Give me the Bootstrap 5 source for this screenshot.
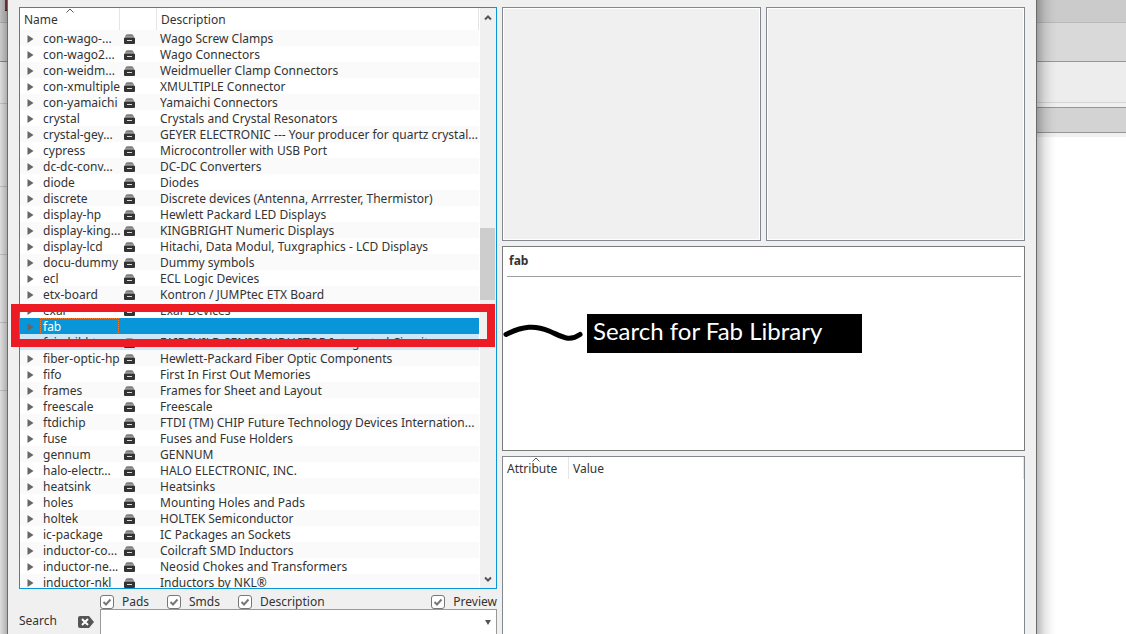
<!DOCTYPE html>
<html lang="en">
<head>
<meta charset="utf-8">
<meta name="viewport" content="width=device-width, initial-scale=1">
<title>Add part</title>
<link href="https://cdn.jsdelivr.net/npm/bootstrap@5.3.0/dist/css/bootstrap.min.css" rel="stylesheet">
<style>
  :root { --face: #f0f0f0; --edge: #828790; --accent: #0996d9; --mark-red: #ed1c24; }
  body { font: 12px/16px "Noto Sans", sans-serif; color: #333; background: #fff; }
  .desk { display: grid; grid-template: minmax(0, 1fr) / 7px minmax(0, 1fr) 89px; }
  .dialog-win { background: var(--face); border: solid #6b6b6b; border-width: 0 1px; padding: 7px 11px 0; }
  .panes { display: grid; grid-template: minmax(0, 1fr) / minmax(0, 478fr) minmax(0, 523fr); gap: 5px; }
  .pane-left { min-height: 0; }
  .pane-right { gap: 5px; }

  /* desktop showing behind the dialog */
  .back-left { background: #e4e4e4; }
  .back-left .b1 { height: 23px; background: #c4c4c4; border-bottom: 1px solid #b0b0b0; }
  .back-left .b1::before { content: ""; display: block; width: 2px; height: 11px; margin-left: 5px; background: #7d3a44; border-bottom: 1px solid #222; }
  .back-left .b2 { height: 39px; background: #d2d2d2; border-bottom: 1px solid #8c8c8c; }
  .back-left .tick { height: 68px; border-bottom: 1px solid #c4c4c4; }
  .back-left .tick.first { height: 42px; }
  .back-left .tick.second { height: 83px; }
  .back-right::before, .back-left::after { content: ""; position: absolute; inset: 0; }
  .back-right::before { background: linear-gradient(to right, #0004, #00000018 8px, #00000006 15px, #0000 20px); }
  .back-left::after { background: linear-gradient(to right, #00000008, #0000003a); }
  .back-right .b1 { height: 23px; background: #cbcbcb; border-bottom: 1px solid #b9b9b9; }
  .back-right .b2 { height: 39px; background: #d9d9d9; border-bottom: 1px solid #969696; }
  .back-right .b3 { height: 41px; background: #ededed; border-bottom: 1px solid #d6d6d6; }
  .back-right .b4 { height: 5px; background: #f0f0f0; border-bottom: 1px solid #969696; }
  .back-right .b5 { height: 25px; background: #d3d3d3; border-bottom: 1px solid #969696; }
  .back-right .b6 { height: 4px; background: #f0f0f0; }

  .lib-list { border: 1px solid var(--accent); background: #fff; min-height: 0; }
  .lib-table, .attr-table { table-layout: fixed; border-collapse: separate; border-spacing: 0; }
  .lib-table th, .attr-table th { height: 22px; padding: 1px 4px 0; font-weight: 400; border-right: 1px solid #e5e5e5; position: relative; }
  .lib-table td { height: 16px; padding: 1px 0 0 3px; white-space: nowrap; overflow: hidden; line-height: 15px; vertical-align: middle; }
  .lib-table tbody tr:nth-child(odd) { background: #fafafa; }
  .lib-table tbody tr.picked { background: var(--accent); color: #fff; }
  .lib-table tbody tr.hovered { background: #cce8f6; }
  .lib-table svg, .attr-table svg { display: block; }
  .lib-table td.icon-cell { padding-left: 4px; }
  .col-name { width: 100px; }
  .col-icon { width: 37px; }
  .col-attr { width: 66px; }
  .node { display: flex; align-items: center; }
  .node svg { margin: 0 9px 0 4px; flex: none; }
  .picked .node span { flex: 1; outline: 1px dotted #f57a2a; margin: 0 2px 0 -2px; padding-left: 2px; }
  .sort-mark { position: absolute; left: 50%; top: 0; margin-left: -4px; }
  .track { width: 17px; flex: none; background: var(--face); border-left: 1px solid #fff; padding: 6px 0 5px; }
  .thumb { position: absolute; left: 0; right: 1px; top: 38%; height: 72px; background: #cdcdcd; }
  .options { height: 20px; margin-left: 81px; padding-top: 5px; }
  .options .form-check-input { width: 14px; height: 14px; margin: 0; border: 1px solid #777; border-radius: 3px; background-size: 12px; background-color: #fff;
    background-image: url("data:image/svg+xml,%3Csvg xmlns='http://www.w3.org/2000/svg' viewBox='0 0 12 12'%3E%3Cpath d='M2.5 6l2.5 2.5 4.5-5' fill='none' stroke='%23777' stroke-width='2'/%3E%3C/svg%3E"); }
  .options label { margin-left: 8px; }
  .options .item { display: flex; align-items: center; height: 16px; }
  .options .w-pads { width: 67px; }
  .options .w-smds { width: 71px; }
  .search-row { height: 25px; }
  .search-row label { width: 59px; }
  .clear-btn { width: 22px; }
  .search-row .combo { border: 1px solid #999; border-bottom: 0; background: #fff; }
  .search-row input { border: 0; outline: 0; min-width: 0; background: none; }
  .plain { border: 0; background: none; padding: 0; display: flex; align-items: center; }

  .previews { display: grid; grid-template-columns: 1fr 1fr; gap: 5px; height: 234px; }
  .preview-box { border: 1px solid var(--edge); box-shadow: inset 0 0 0 1px #fff; }
  .info-box { height: 205px; border: 1px solid #7a7a7a; background: #fff; padding: 0 3px 0 4px; }
  .info-box h2 { font: 700 12px/16px "Noto Sans", sans-serif; padding: 6px 2px 7px; margin: 0; border-bottom: 1px solid #a0a0a0; }
  .attr-box { border: 1px solid var(--edge); border-bottom: 0; background: #fff; }

  .red-frame { position: absolute; left: -8px; right: 2px; top: 297px; height: 43px; border: 8px solid var(--mark-red); }
  .callout { position: absolute; left: 1px; top: 307px; }
  .callout svg { display: block; }
  .callout p { width: 275px; height: 39px; margin: 0 0 0 4px; padding-left: 6px; background: #000; color: #fff; font: 24px/34px Lato, sans-serif; }
</style>
</head>
<body>
<svg class="d-none">
  <symbol id="i-drawer" viewBox="0 0 11 10"><path d="M0 4.500 1.500 1.500Q2 0 3.500 0H7.500Q9 0 9.500 1.500L11 4.500Z" fill="#999"/><path d="M1 3.500H10M2 1.500H9" stroke="#777" stroke-width=".8"/><path d="M0 4H11V9Q11 10 10 10H1Q0 10 0 9Z" fill="#333"/><path d="M3 6.500H8" stroke="#ddd"/></symbol>
  <symbol id="i-tri" viewBox="0 0 7 8"><path d="M.5 0 6.500 4 .5 8Z" fill="#666"/></symbol>
  <symbol id="i-sort" viewBox="0 0 8 5"><path d="M.5 4.500 4 1 7.500 4.500" fill="none" stroke="#555"/></symbol>
  <symbol id="i-up" viewBox="0 0 8 7"><path d="M1 5.500 4 2.500 7 5.500" fill="none" stroke="#555" stroke-width="2"/></symbol>
  <symbol id="i-down" viewBox="0 0 8 7"><path d="M1 1.500 4 4.500 7 1.500" fill="none" stroke="#555" stroke-width="2"/></symbol>
</svg>

<div class="desk vh-100 overflow-hidden">
  <div class="back-left position-relative overflow-hidden">
    <div class="b1"></div><div class="b2"></div>
    <div class="tick first"></div><div class="tick second"></div><div class="tick"></div><div class="tick"></div><div class="tick"></div>
  </div>

  <main class="dialog-win panes">
    <section class="position-relative d-flex flex-column pane-left">
      <div class="lib-list d-flex flex-grow-1 overflow-hidden">
        <div class="flex-grow-1 overflow-hidden">
          <table class="lib-table w-100">
            <colgroup><col class="col-name"><col class="col-icon"><col></colgroup>
            <thead><tr>
              <th scope="col">Name<svg class="sort-mark" width="8" height="5"><use href="#i-sort"/></svg></th>
              <th scope="col"></th><th scope="col">Description</th>
            </tr></thead>
            <tbody id="libs"></tbody>
          </table>
        </div>
        <div class="track d-flex flex-column align-items-center justify-content-between position-relative">
          <button class="plain" aria-label="Scroll up"><svg width="8" height="7"><use href="#i-up"/></svg></button>
          <div class="thumb"></div>
          <button class="plain" aria-label="Scroll down"><svg width="8" height="7"><use href="#i-down"/></svg></button>
        </div>
      </div>
      <div class="options d-flex">
        <div class="item w-pads"><input class="form-check-input" type="checkbox" id="pads" checked><label for="pads">Pads</label></div>
        <div class="item w-smds"><input class="form-check-input" type="checkbox" id="smds" checked><label for="smds">Smds</label></div>
        <div class="item"><input class="form-check-input" type="checkbox" id="desc" checked><label for="desc">Description</label></div>
        <div class="item ms-auto"><input class="form-check-input" type="checkbox" id="prev" checked><label for="prev">Preview</label></div>
      </div>
      <div class="search-row d-flex">
        <label for="search" class="pt-1">Search</label>
        <button class="plain clear-btn" aria-label="Clear search"><svg width="16" height="12" viewBox="0 0 16 12"><path d="M2 0H11L16 6 11 12H2Q0 12 0 10V2Q0 0 2 0Z" fill="#555"/><path d="M4 3 10 9M10 3 4 9" stroke="#fff" stroke-width="2"/></svg></button>
        <div class="combo d-flex flex-grow-1">
          <input id="search" class="flex-grow-1" type="text">
          <button class="plain pe-1" aria-label="Recent searches"><svg width="8" height="5" viewBox="0 0 8 5"><path d="M1 0H7L4 5Z" fill="#555"/></svg></button>
        </div>
      </div>
      <div class="red-frame"></div>
    </section>

    <section class="position-relative d-flex flex-column pane-right">
      <div class="previews"><div class="preview-box"></div><div class="preview-box"></div></div>
      <div class="info-box"><h2>fab</h2></div>
      <div class="attr-box flex-grow-1">
        <table class="attr-table w-100">
          <colgroup><col class="col-attr"><col></colgroup>
          <thead><tr><th scope="col">Attribute<svg class="sort-mark" width="8" height="5"><use href="#i-sort"/></svg></th><th scope="col">Value</th></tr></thead>
        </table>
      </div>
      <div class="callout d-flex">
        <svg width="80" height="39" viewBox="0 0 80 39"><path d="M3 20.500C20 12 32 11 46 17S66 28 77 20.500" fill="none" stroke="#000" stroke-width="5" stroke-linecap="round"/></svg>
        <p>Search for Fab Library</p>
      </div>
    </section>
  </main>

  <div class="back-right position-relative">
    <div class="b1"></div><div class="b2"></div><div class="b3"></div><div class="b4"></div><div class="b5"></div><div class="b6"></div>
  </div>
</div>

<script src="https://cdn.jsdelivr.net/npm/bootstrap@5.3.0/dist/js/bootstrap.bundle.min.js"></script>
<script>
  const libs = [
    ["con-wago-...", "Wago Screw Clamps"], ["con-wago2...", "Wago Connectors"],
    ["con-weidm...", "Weidmueller Clamp Connectors"], ["con-xmultiple", "XMULTIPLE Connector"],
    ["con-yamaichi", "Yamaichi Connectors"], ["crystal", "Crystals and Crystal Resonators"],
    ["crystal-gey...", "GEYER ELECTRONIC --- Your producer for quartz crystal..."],
    ["cypress", "Microcontroller with USB Port"], ["dc-dc-conv...", "DC-DC Converters"],
    ["diode", "Diodes"], ["discrete", "Discrete devices (Antenna, Arrrester, Thermistor)"],
    ["display-hp", "Hewlett Packard LED Displays"], ["display-king...", "KINGBRIGHT Numeric Displays"],
    ["display-lcd", "Hitachi, Data Modul, Tuxgraphics - LCD Displays"], ["docu-dummy", "Dummy symbols"],
    ["ecl", "ECL Logic Devices"], ["etx-board", "Kontron / JUMPtec ETX Board"], ["exar", "Exar Devices"],
    ["fab", "", "picked"], ["fairchild-t...", "FAIRCHILD SEMICONDUCTOR Integrated Circuit", "hovered"],
    ["fiber-optic-hp", "Hewlett-Packard Fiber Optic Components"], ["fifo", "First In First Out Memories"],
    ["frames", "Frames for Sheet and Layout"], ["freescale", "Freescale"],
    ["ftdichip", "FTDI (TM) CHIP Future Technology Devices Internation..."], ["fuse", "Fuses and Fuse Holders"],
    ["gennum", "GENNUM"], ["halo-electr...", "HALO ELECTRONIC, INC."], ["heatsink", "Heatsinks"],
    ["holes", "Mounting Holes and Pads"], ["holtek", "HOLTEK Semiconductor"],
    ["ic-package", "IC Packages an Sockets"], ["inductor-co...", "Coilcraft SMD Inductors"],
    ["inductor-ne...", "Neosid Chokes and Transformers"], ["inductor-nkl", "Inductors by NKL®"]
  ];
  document.getElementById("libs").innerHTML = libs.map(([name, text, state = ""]) => `
    <tr class="${state}">
      <td><div class="node"><svg width="7" height="8"><use href="#i-tri"/></svg><span>${name}</span></div></td>
      <td class="icon-cell">${state === "picked" ? "" : '<svg width="11" height="10"><use href="#i-drawer"/></svg>'}</td>
      <td>${text}</td>
    </tr>`).join("");
</script>
</body>
</html>
